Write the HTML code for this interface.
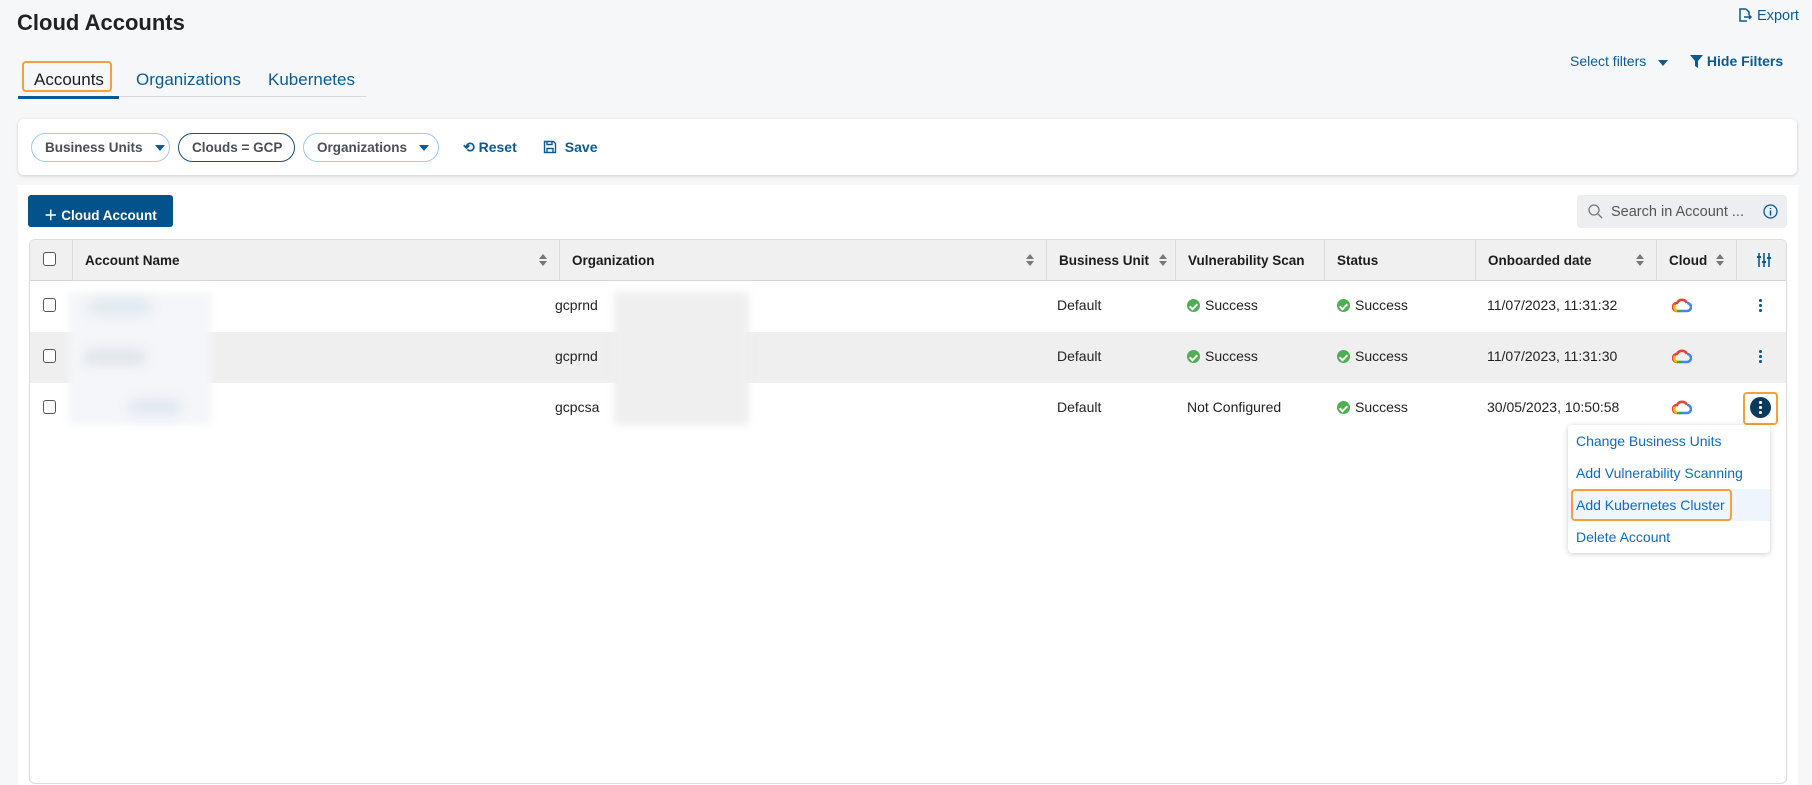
<!DOCTYPE html>
<html><head><meta charset="utf-8"><style>
*{box-sizing:border-box;margin:0;padding:0}
body{width:1812px;height:773px;overflow:hidden;background:#f6f7f9;font-family:"Liberation Sans",sans-serif;color:#1c1c1c;position:relative}
.a{position:absolute;white-space:nowrap}
.blue{color:#0b5a94}
.pill{position:absolute;top:133px;height:29px;border:1px solid #9fcdf0;border-radius:15px;font-size:13.5px;font-weight:bold;color:#4a4f55;display:flex;align-items:center;padding-left:13px;background:#fff;white-space:nowrap}
.tri{display:inline-block;width:0;height:0;border-left:5px solid transparent;border-right:5px solid transparent;border-top:6px solid #0b5a94;margin-left:12px}
.th{position:absolute;top:239px;height:42px;display:flex;align-items:center;font-size:13.5px;font-weight:bold;padding-left:12px;border-right:1px solid #dcdcdc;white-space:nowrap}
.sort{position:absolute;right:12px;top:15px;width:8px}
.sort:before{content:"";position:absolute;left:0;top:0;border-left:4px solid transparent;border-right:4px solid transparent;border-bottom:5px solid #777}
.sort:after{content:"";position:absolute;left:0;top:7px;border-left:4px solid transparent;border-right:4px solid transparent;border-top:5px solid #777}
.td{position:absolute;font-size:14px;color:#222;white-space:nowrap}
.cb{position:absolute;left:43px;width:13px;height:14px;border:1.5px solid #555;border-radius:3px;background:#fff}
.ok{display:inline-block;width:13px;height:13px;border-radius:50%;background:#4caf50;vertical-align:-2px;margin-right:5px;position:relative}
.ok:after{content:"";position:absolute;left:4px;top:2.5px;width:3px;height:6px;border-right:2px solid #fff;border-bottom:2px solid #fff;transform:rotate(45deg)}
.dots{position:absolute;left:1759px;width:3px}
.dots i{display:block;width:2.5px;height:2.5px;background:#0b5a94;border-radius:50%;margin-bottom:2.5px}
.mi{position:absolute;left:1576px;font-size:14px;color:#0b6cc2;white-space:nowrap}
</style></head><body>
<div class="a" style="left:17px;top:10px;font-size:22px;font-weight:bold;color:#222">Cloud Accounts</div>
<div class="a blue" style="left:1737px;top:7px;font-size:14.5px">
<svg width="16" height="16" viewBox="0 0 16 16" style="vertical-align:-3px"><path d="M9 2H3v12h7M9 2l3 3v3M7 10h7M12 8l2 2-2 2" fill="none" stroke="#0b5a94" stroke-width="1.5"/></svg> Export</div>
<div class="a blue" style="left:1570px;top:53px;font-size:14px">Select filters <span class="tri" style="margin-left:8px"></span></div>
<div class="a blue" style="left:1690px;top:53px;font-size:14px;font-weight:bold"><svg width="13" height="13" viewBox="0 0 13 13" style="vertical-align:-2px"><path d="M0 0h13L8 6v7L5 11V6z" fill="#0b5a94"/></svg> Hide Filters</div>

<div class="a" style="left:34px;top:70px;font-size:17px">Accounts</div>
<div class="a blue" style="left:136px;top:70px;font-size:17px">Organizations</div>
<div class="a blue" style="left:268px;top:70px;font-size:17px">Kubernetes</div>
<div class="a" style="left:22px;top:61px;width:90px;height:31px;border:2.5px solid #f7a03a;border-radius:4px"></div>
<div class="a" style="left:18px;top:96px;width:348px;height:1px;background:#d8d8d8"></div>
<div class="a" style="left:18px;top:96px;width:101px;height:3px;background:#0b5a94"></div>

<div class="a" style="left:18px;top:119px;width:1779px;height:56px;background:#fff;border-radius:6px;box-shadow:0 1px 3px rgba(0,0,0,.18)"></div>
<div class="pill" style="left:31px;width:139px">Business Units <span class="tri"></span></div>
<div class="pill" style="left:178px;width:117px;border-color:#1d4f7a;color:#4a4f55">Clouds = GCP</div>
<div class="pill" style="left:303px;width:136px">Organizations <span class="tri"></span></div>
<div class="a blue" style="left:463px;top:139px;font-size:14px;font-weight:bold">⟲ Reset</div>
<div class="a blue" style="left:543px;top:139px;font-size:14px;font-weight:bold"><svg width="14" height="14" viewBox="0 0 14 14" style="vertical-align:-2px"><path d="M1.5 1.5h9l2 2v9h-11zM4 1.5v3h5v-3M4 12.5v-4h6v4" fill="none" stroke="#0b5a94" stroke-width="1.4"/></svg>&nbsp; Save</div>

<div class="a" style="left:18px;top:185px;width:1780px;height:600px;background:#fff"></div>
<div class="a" style="left:28px;top:195px;width:145px;height:32px;background:#03528c;border-radius:3px;color:#fff;font-size:13.5px;font-weight:bold;padding:9px 0 0 16px">＋ Cloud Account</div>
<div class="a" style="left:1577px;top:195px;width:210px;height:33px;background:#eceef1;border-radius:4px;font-size:14.5px;color:#555;padding:9px 0 0 34px">Search in Account ...</div>
<svg class="a" style="left:1588px;top:204px" width="15" height="15" viewBox="0 0 15 15"><circle cx="6" cy="6" r="5" fill="none" stroke="#777" stroke-width="1.3"/><path d="M10 10l4 4" stroke="#777" stroke-width="1.3"/></svg>
<svg class="a" style="left:1763px;top:204px" width="15" height="15" viewBox="0 0 15 15"><circle cx="7.5" cy="7.5" r="6.5" fill="none" stroke="#0b5a94" stroke-width="1.3"/><path d="M7.5 6.5v5M7.5 4v1" stroke="#0b5a94" stroke-width="1.5"/></svg>

<div class="a" style="left:29px;top:239px;width:1758px;height:545px;border:1px solid #dcdcdc;border-radius:6px"></div>
<div class="a" style="left:30px;top:240px;width:1756px;height:41px;background:#f0f0f0;border-bottom:1px solid #d6d6d6;border-radius:6px 6px 0 0"></div>
<div class="th" style="left:29px;width:44px"></div><div class="cb" style="top:252px"></div>
<div class="th" style="left:73px;width:487px">Account Name<span class="sort"></span></div>
<div class="th" style="left:560px;width:487px">Organization<span class="sort"></span></div>
<div class="th" style="left:1047px;width:129px">Business Unit<span class="sort" style="right:8px"></span></div>
<div class="th" style="left:1176px;width:149px">Vulnerability Scan</div>
<div class="th" style="left:1325px;width:151px">Status</div>
<div class="th" style="left:1476px;width:181px">Onboarded date<span class="sort"></span></div>
<div class="th" style="left:1657px;width:80px">Cloud<span class="sort"></span></div>
<div class="th" style="left:1737px;width:50px;border:none"><svg style="margin-left:8px" width="14" height="16" viewBox="0 0 14 16"><path d="M2 1v14M7 1v14M12 1v14" stroke="#0b5a94" stroke-width="1.6"/><path d="M0 5h4M5 10h4M10 6h4" stroke="#0b5a94" stroke-width="2"/></svg></div>

<div class="a" style="left:30px;top:332px;width:1756px;height:51px;background:#efefef"></div>
<div class="a" style="left:69px;top:292px;width:142px;height:133px;background:#f4f6f9;filter:blur(4px)"></div>
<div class="a" style="left:90px;top:300px;width:60px;height:14px;background:#dfe6ef;filter:blur(6px)"></div>
<div class="a" style="left:85px;top:350px;width:60px;height:14px;background:#dde3eb;filter:blur(6px)"></div>
<div class="a" style="left:130px;top:400px;width:50px;height:14px;background:#dfe6ef;filter:blur(6px)"></div>
<div class="a" style="left:614px;top:292px;width:135px;height:133px;background:#efefef;filter:blur(4px)"></div>

<div class="cb" style="top:298px"></div><div class="cb" style="top:349px"></div><div class="cb" style="top:400px"></div>
<div class="td" style="left:555px;top:297px">gcprnd</div>
<div class="td" style="left:555px;top:348px">gcprnd</div>
<div class="td" style="left:555px;top:399px">gcpcsa</div>
<div class="td" style="left:1057px;top:297px">Default</div>
<div class="td" style="left:1057px;top:348px">Default</div>
<div class="td" style="left:1057px;top:399px">Default</div>
<div class="td" style="left:1187px;top:297px"><span class="ok"></span>Success</div>
<div class="td" style="left:1187px;top:348px"><span class="ok"></span>Success</div>
<div class="td" style="left:1187px;top:399px">Not Configured</div>
<div class="td" style="left:1337px;top:297px"><span class="ok"></span>Success</div>
<div class="td" style="left:1337px;top:348px"><span class="ok"></span>Success</div>
<div class="td" style="left:1337px;top:399px"><span class="ok"></span>Success</div>
<div class="td" style="left:1487px;top:297px">11/07/2023, 11:31:32</div>
<div class="td" style="left:1487px;top:348px">11/07/2023, 11:31:30</div>
<div class="td" style="left:1487px;top:399px">30/05/2023, 10:50:58</div>

<svg class="a" style="left:1672px;top:296px" width="20" height="17" viewBox="0 0 20 17"><path d="M6 15H5a4 4 0 0 1 0-8 5.5 5.5 0 0 1 10 0" fill="none" stroke="#ea4335" stroke-width="2.6"/><path d="M15 7a4 4 0 0 1 0 8H10" fill="none" stroke="#4285f4" stroke-width="2.6"/><path d="M6 15h4" stroke="#34a853" stroke-width="2.6"/><path d="M3 9a4 4 0 0 0 2 6" fill="none" stroke="#fbbc05" stroke-width="2.6"/></svg>
<svg class="a" style="left:1672px;top:347px" width="20" height="17" viewBox="0 0 20 17"><path d="M6 15H5a4 4 0 0 1 0-8 5.5 5.5 0 0 1 10 0" fill="none" stroke="#ea4335" stroke-width="2.6"/><path d="M15 7a4 4 0 0 1 0 8H10" fill="none" stroke="#4285f4" stroke-width="2.6"/><path d="M6 15h4" stroke="#34a853" stroke-width="2.6"/><path d="M3 9a4 4 0 0 0 2 6" fill="none" stroke="#fbbc05" stroke-width="2.6"/></svg>
<svg class="a" style="left:1672px;top:398px" width="20" height="17" viewBox="0 0 20 17"><path d="M6 15H5a4 4 0 0 1 0-8 5.5 5.5 0 0 1 10 0" fill="none" stroke="#ea4335" stroke-width="2.6"/><path d="M15 7a4 4 0 0 1 0 8H10" fill="none" stroke="#4285f4" stroke-width="2.6"/><path d="M6 15h4" stroke="#34a853" stroke-width="2.6"/><path d="M3 9a4 4 0 0 0 2 6" fill="none" stroke="#fbbc05" stroke-width="2.6"/></svg>

<div class="dots" style="top:299px"><i></i><i></i><i></i></div>
<div class="dots" style="top:350px"><i></i><i></i><i></i></div>
<div class="a" style="left:1743px;top:392px;width:35px;height:33px;border:2.5px solid #f7a03a;border-radius:4px"></div>
<div class="a" style="left:1750px;top:397px;width:21px;height:21px;border-radius:50%;background:#0a3b5c"></div>
<div class="dots" style="top:401px;left:1759px"><i style="background:#fff"></i><i style="background:#fff"></i><i style="background:#fff"></i></div>

<div class="a" style="left:1568px;top:425px;width:202px;height:128px;background:#fff;border-radius:4px;box-shadow:0 1px 6px rgba(0,0,0,.2)"></div>
<div class="a" style="left:1568px;top:489px;width:202px;height:32px;background:#eef5fc"></div>
<div class="mi" style="top:433px">Change Business Units</div>
<div class="mi" style="top:465px">Add Vulnerability Scanning</div>
<div class="mi" style="top:497px">Add Kubernetes Cluster</div>
<div class="mi" style="top:529px">Delete Account</div>
<div class="a" style="left:1571px;top:489px;width:161px;height:32px;border:2.5px solid #f7a03a;border-radius:4px"></div>
</body></html>
